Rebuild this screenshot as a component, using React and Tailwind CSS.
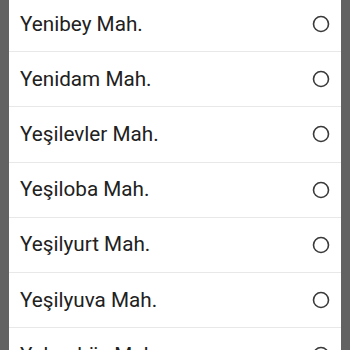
const items = [
  "Yenibey Mah.",
  "Yenidam Mah.",
  "Yeşilevler Mah.",
  "Yeşiloba Mah.",
  "Yeşilyurt Mah.",
  "Yeşilyuva Mah.",
  "Yukarıköy Mah.",
];

function Radio() {
  return (
    <svg width="18" height="18" viewBox="0 0 18 18" className="shrink-0">
      <circle cx="9" cy="9" r="7.5" fill="none" stroke="#3a3a3a" strokeWidth="1.6" />
    </svg>
  );
}

export default function App() {
  return (
    <div className="w-[350px] h-[350px] overflow-hidden bg-[#626262] flex" style={{ fontFamily: "Roboto, 'Liberation Sans', sans-serif" }}>
      <div className="ml-[9px] w-[332px] bg-white flex flex-col -mt-[3px]">
        {items.map((name) => (
          <div key={name} className="h-[55.2px] shrink-0 flex items-center justify-between pl-[11px] pr-[11px] border-b border-[#e8e8e8]">
            <span className="text-[20.7px] text-[#212121] leading-none">{name}</span>
            <Radio />
          </div>
        ))}
      </div>
    </div>
  );
}
